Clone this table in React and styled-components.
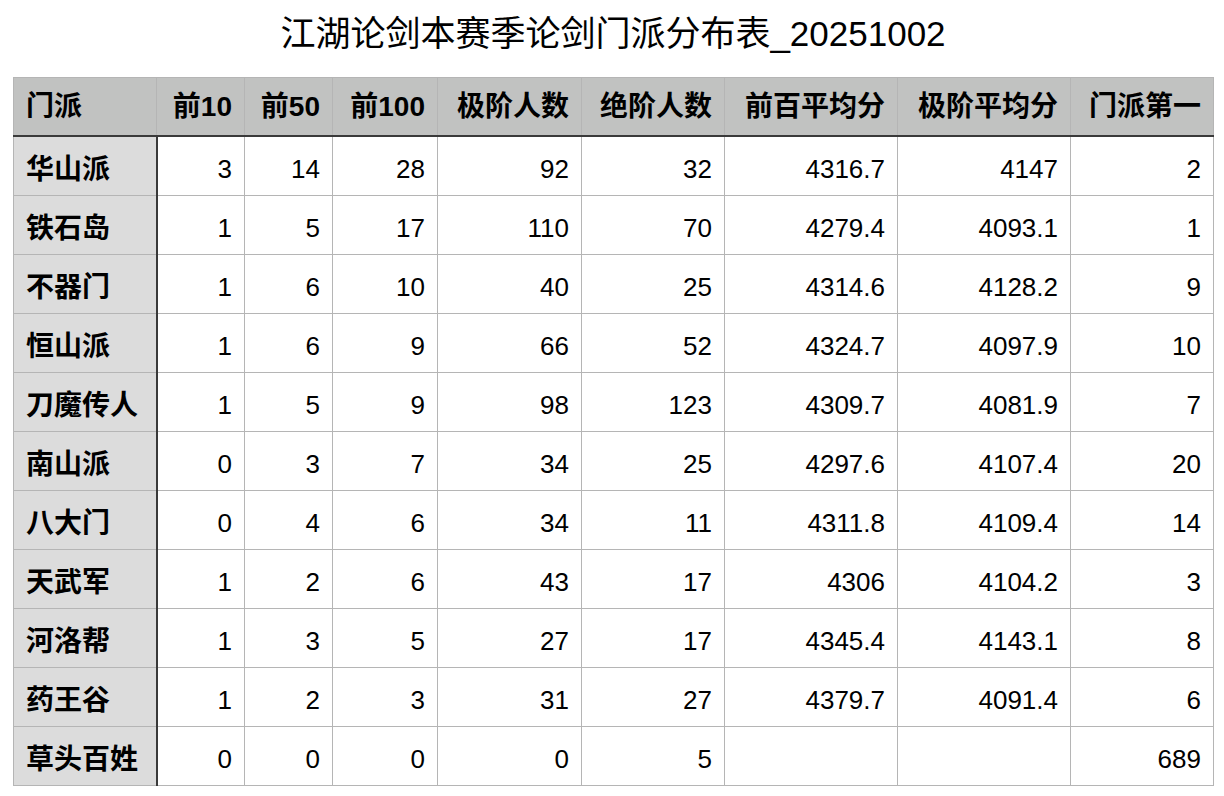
import React from 'react'
import styled, { createGlobalStyle } from 'styled-components'

const GlobalStyle = createGlobalStyle`
    html, body {
        margin: 0;
        padding: 0;
        background: #fff;
    }
    body {
        font-family: "Liberation Sans", "Noto Sans CJK SC", sans-serif;
        color: #000;
    }
`

const columns = [
    { label: '门派', width: 143 },
    { label: '前10', width: 88 },
    { label: '前50', width: 88 },
    { label: '前100', width: 105 },
    { label: '极阶人数', width: 144 },
    { label: '绝阶人数', width: 143 },
    { label: '前百平均分', width: 173 },
    { label: '极阶平均分', width: 173 },
    { label: '门派第一', width: 143 },
]

const rows = [
    ['华山派', 3, 14, 28, 92, 32, '4316.7', '4147', 2],
    ['铁石岛', 1, 5, 17, 110, 70, '4279.4', '4093.1', 1],
    ['不器门', 1, 6, 10, 40, 25, '4314.6', '4128.2', 9],
    ['恒山派', 1, 6, 9, 66, 52, '4324.7', '4097.9', 10],
    ['刀魔传人', 1, 5, 9, 98, 123, '4309.7', '4081.9', 7],
    ['南山派', 0, 3, 7, 34, 25, '4297.6', '4107.4', 20],
    ['八大门', 0, 4, 6, 34, 11, '4311.8', '4109.4', 14],
    ['天武军', 1, 2, 6, 43, 17, '4306', '4104.2', 3],
    ['河洛帮', 1, 3, 5, 27, 17, '4345.4', '4143.1', 8],
    ['药王谷', 1, 2, 3, 31, 27, '4379.7', '4091.4', 6],
    ['草头百姓', 0, 0, 0, 0, 5, '', '', 689],
]

const Page = styled.div`
    padding: 0 11px 0 13px;
`

const Title = styled.h1`
    margin: 0;
    height: 77px;
    display: flex;
    align-items: center;
    justify-content: center;
    padding-bottom: 10px;
    box-sizing: border-box;
    font-size: 35px;
    line-height: 1;
    font-weight: 400;
    font-family: "Liberation Sans", "Noto Sans CJK SC", sans-serif;
`

const Table = styled.table`
    border-collapse: collapse;
    table-layout: fixed;
    width: 1200px;
    border: 1px solid #b5b5b5;
`

const HeadCell = styled.th`
    height: 56px;
    padding: 1px 12px 0 12px;
    line-height: 1.2;
    background: #c1c2c1;
    border: 1px solid #b5b5b5;
    border-bottom: 2px solid #3a3a3a;
    font-size: 28px;
    font-weight: 700;
    text-align: ${({ $first }) => ($first ? 'left' : 'right')};
    white-space: nowrap;
`

const NameCell = styled.th`
    height: 51px;
    padding: 7px 12px 0 12px;
    line-height: 1.2;
    background: #dcdcdc;
    border: 1px solid #b5b5b5;
    border-right: 2px solid #3a3a3a;
    font-size: 28px;
    font-weight: 700;
    text-align: left;
    white-space: nowrap;
`

const ValueCell = styled.td`
    height: 51px;
    padding: 7px 12px 0 12px;
    line-height: 1.2;
    border: 1px solid #b5b5b5;
    font-size: 26px;
    text-align: right;
    white-space: nowrap;
`

const App = () => {

    return (
        <Page>
            <GlobalStyle />
            <Title>江湖论剑本赛季论剑门派分布表_20251002</Title>
            <Table>
                <colgroup>
                    {
                        columns.map((col, index) => (

                            <col key={index} style={{ width: col.width }} />
                        ))
                    }
                </colgroup>
                <thead>
                    <tr>
                        {
                            columns.map((col, index) => (

                                <HeadCell key={index} $first={index === 0}>{col.label}</HeadCell>
                            ))
                        }
                    </tr>
                </thead>
                <tbody>
                    {
                        rows.map((row, index) => (

                            <tr key={index}>
                                <NameCell>{row[0]}</NameCell>
                                {
                                    row.slice(1).map((value, i) => (

                                        <ValueCell key={i}>{value}</ValueCell>
                                    ))
                                }
                            </tr>
                        ))
                    }
                </tbody>
            </Table>
        </Page>
    )
}

export default App
